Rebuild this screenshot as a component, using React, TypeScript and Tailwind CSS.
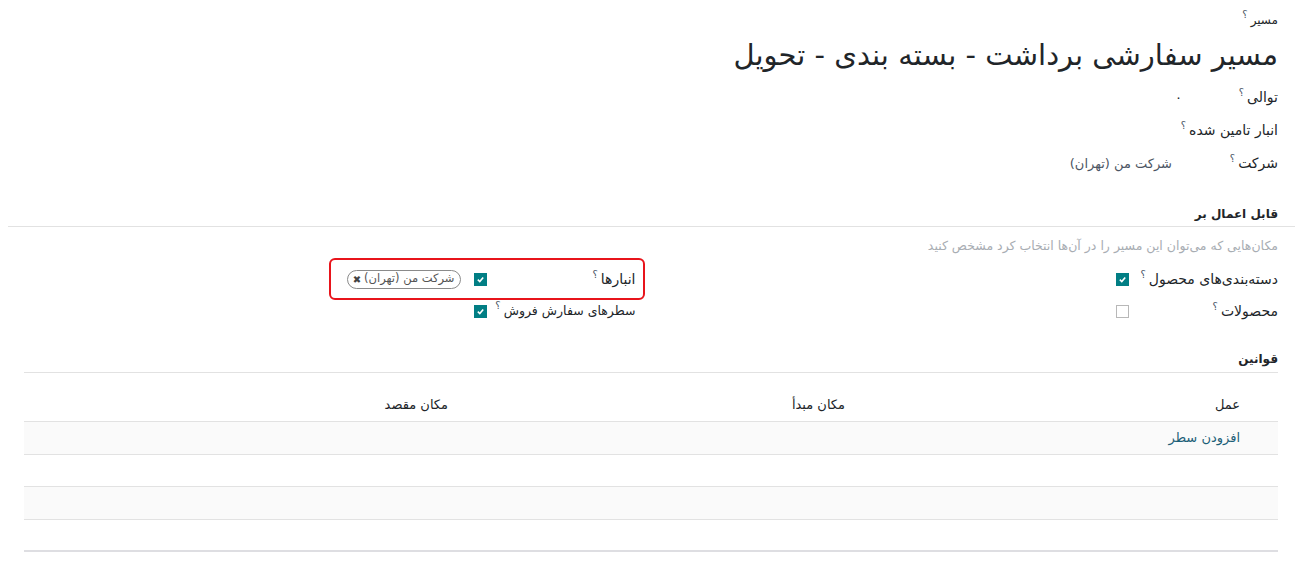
import React from "react";

const Q = () => <sup className="text-[10px] text-gray-600 mr-[3px] -top-[6px]">؟</sup>;

const Check = ({ checked }: { checked: boolean }) =>
  checked ? (
    <span className="inline-flex shrink-0 w-[13px] h-[13px] bg-[#017e84] items-center justify-center">
      <svg width="9" height="9" viewBox="0 0 10 10">
        <path d="M2 5.2 L4.2 7.2 L8 2.8" stroke="white" strokeWidth="1.8" fill="none" />
      </svg>
    </span>
  ) : (
    <span className="inline-block shrink-0 w-[13px] h-[13px] border border-[#b8b8b8] bg-white" />
  );

const Field = ({ label, children }: { label: string; children?: React.ReactNode }) => (
  <div className="flex items-center h-[33px]">
    <div className="w-[106px] shrink-0 text-[14px] font-medium text-[#212529] whitespace-nowrap">
      {label}
      <Q />
    </div>
    <div className="text-[13px] text-[#4b5563]">{children}</div>
  </div>
);

const BoolRow = ({
  label,
  checked,
  small,
  children,
}: {
  label: string;
  checked: boolean;
  small?: boolean;
  children?: React.ReactNode;
}) => (
  <div className="flex items-center h-[32px]">
    <div
      className={`w-[149px] shrink-0 font-medium text-[#212529] whitespace-nowrap ${small ? "text-[12.5px]" : "text-[14px]"}`}
    >
      {label}
      <Q />
    </div>
    <Check checked={checked} />
    {children}
  </div>
);

export default function App() {
  return (
    <div dir="rtl" className="w-[1308px] h-[578px] bg-white overflow-hidden font-['DejaVu_Sans',sans-serif] text-[#212529]">
      <div className="px-[30px] pt-[12px]">
        <div className="text-[12px] font-medium h-[16px] leading-[16px]">
          مسیر
          <Q />
        </div>
        <h1 className="text-[29px] leading-[44px] h-[48px] mt-[5px]">مسیر سفارشی برداشت - بسته بندی - تحویل</h1>
        <div>
          <Field label="توالی">
            <span className="mr-[-10px] text-[#212529]">۰</span>
          </Field>
          <Field label="انبار تامین شده" />
          <Field label="شرکت">شرکت من (تهران)</Field>
        </div>
      </div>

      <div className="mt-[25px] mr-[13px] ml-[8px]">
        <div className="pr-[17px] text-[12px] font-bold pb-[3px] border-b border-[#e2e2e2]">قابل اعمال بر</div>
      </div>
      <div className="px-[30px] pt-[8px]">
        <div className="text-[12.5px] text-[#a8adb3] h-[22px] leading-[22px] whitespace-nowrap">
          مکان‌هایی که می‌توان این مسیر را در آن‌ها انتخاب کرد مشخص کنید
        </div>
        <div className="grid grid-cols-2 gap-x-[37px] mt-[6px]">
          <div>
            <BoolRow label="دسته‌بندی‌های محصول" checked />
            <BoolRow label="محصولات" checked={false} />
          </div>
          <div>
            <div className="relative">
              <BoolRow label="انبارها" checked>
                <span className="inline-flex items-center gap-[3px] mr-[13px] h-[19px] px-[5px] rounded-full border border-[#8a8a8a] text-[11.5px] text-[#555] whitespace-nowrap">
                  شرکت من (تهران)
                  <span className="text-[10px] text-[#444]">✖</span>
                </span>
              </BoolRow>
              <div className="absolute -top-[5px] -bottom-[5px] -right-[9px] w-[316px] border-2 border-[#e8141b] rounded-[6px] pointer-events-none" />
            </div>
            <BoolRow label="سطرهای سفارش فروش" checked small />
          </div>
        </div>
      </div>

      <div className="mr-[30px] ml-[24px] mt-[23px]">
        <div className="text-[12px] font-bold pb-[4px] border-b border-[#e2e2e2]">قوانین</div>
        <div className="mt-[16px] text-[13px]">
          <div className="flex h-[33px] items-center border-b border-[#e2e2e2] font-medium">
            <div className="w-[30px]" />
            <div className="w-[395px] px-[8px]">عمل</div>
            <div className="w-[397px] px-[8px]">مکان مبدأ</div>
            <div className="flex-1 px-[8px]">مکان مقصد</div>
          </div>
          <div className="flex h-[33px] items-center border-b border-[#e2e2e2] bg-[#fafafa]">
            <div className="w-[30px]" />
            <div className="px-[8px] text-[#1d5f78]">افزودن سطر</div>
          </div>
          <div className="h-[32px] border-b border-[#e2e2e2]" />
          <div className="h-[33px] border-b border-[#e2e2e2] bg-[#fafafa]" />
          <div className="h-[32px] border-b-2 border-[#dedee2]" />
        </div>
      </div>
    </div>
  );
}
